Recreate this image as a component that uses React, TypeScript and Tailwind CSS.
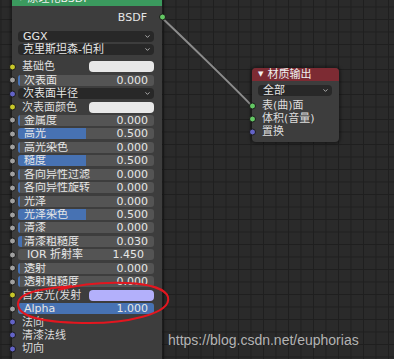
import { ChevronDown } from "lucide-react"

type Row =
  | { kind: "color"; label: string; color: string; socket: string }
  | { kind: "slider"; label: string; value: number; socket: string }
  | { kind: "drop"; label: string; socket: string }
  | { kind: "num"; label: string; value: string; socket: string }
  | { kind: "label"; label: string; socket: string }

const YELLOW = "#c7c729"
const GRAY = "#a1a1a1"
const VEC = "#6363c7"
const GREEN = "#63c763"

const rows: Row[] = [
  { kind: "color", label: "基础色", color: "#e8e8e8", socket: YELLOW },
  { kind: "slider", label: "次表面", value: 0, socket: GRAY },
  { kind: "drop", label: "次表面半径", socket: VEC },
  { kind: "color", label: "次表面颜色", color: "#e8e8e8", socket: YELLOW },
  { kind: "slider", label: "金属度", value: 0, socket: GRAY },
  { kind: "slider", label: "高光", value: 0.5, socket: GRAY },
  { kind: "slider", label: "高光染色", value: 0, socket: GRAY },
  { kind: "slider", label: "糙度", value: 0.5, socket: GRAY },
  { kind: "slider", label: "各向异性过滤", value: 0, socket: GRAY },
  { kind: "slider", label: "各向异性旋转", value: 0, socket: GRAY },
  { kind: "slider", label: "光泽", value: 0, socket: GRAY },
  { kind: "slider", label: "光泽染色", value: 0.5, socket: GRAY },
  { kind: "slider", label: "清漆", value: 0, socket: GRAY },
  { kind: "slider", label: "清漆粗糙度", value: 0.03, socket: GRAY },
  { kind: "num", label: "IOR 折射率", value: "1.450", socket: GRAY },
  { kind: "slider", label: "透射", value: 0, socket: GRAY },
  { kind: "slider", label: "透射粗糙度", value: 0, socket: GRAY },
  { kind: "color", label: "自发光(发射", color: "#b3b0fb", socket: YELLOW },
  { kind: "slider", label: "Alpha", value: 1, socket: GRAY },
  { kind: "label", label: "法向", socket: VEC },
  { kind: "label", label: "清漆法线", socket: VEC },
  { kind: "label", label: "切向", socket: VEC },
]

function Socket({ color, side = "left" }: { color: string; side?: "left" | "right" }) {
  return (
    <span
      className={`absolute top-1/2 h-[7px] w-[7px] -translate-y-1/2 rounded-full border border-[#1a1a1a] ${
        side === "left" ? "left-[-3.5px]" : "right-[-3.5px]"
      }`}
      style={{ backgroundColor: color }}
    />
  )
}

function InputRow({ row }: { row: Row }) {
  return (
    <div className="relative flex h-[13.45px] items-center">
      <Socket color={row.socket} />
      {row.kind === "color" && (
        <div className="flex w-full items-center pl-[10px] pr-[8px]">
          <span className="flex-1 text-[#dcdcdc]">{row.label}</span>
          <span className="h-[11px] w-[65px] rounded-[4px]" style={{ backgroundColor: row.color }} />
        </div>
      )}
      {row.kind === "slider" && (
        <div className="ml-[6px] mr-[8px] flex-1">
          <div className="relative h-[11px] overflow-hidden rounded-[3px] bg-[#545454]">
            <div
              className="absolute inset-y-0 left-0 bg-[#4772b3]"
              style={{ width: `${Math.max(row.value, 0.012) * 100}%` }}
            />
            <div className="relative flex h-full items-center justify-between pl-[6px] pr-[6px] text-[#e6e6e6]">
              <span>{row.label}</span>
              <span>{row.value.toFixed(3)}</span>
            </div>
          </div>
        </div>
      )}
      {row.kind === "num" && (
        <div className="ml-[6px] mr-[8px] flex-1">
          <div className="flex h-[11px] items-center justify-between rounded-[3px] bg-[#545454] pl-[9px] pr-[10px] text-[#e6e6e6]">
            <span>{row.label}</span>
            <span>{row.value}</span>
          </div>
        </div>
      )}
      {row.kind === "drop" && (
        <div className="ml-[6px] mr-[8px] flex-1">
          <Dropdown text={row.label} />
        </div>
      )}
      {row.kind === "label" && <span className="pl-[10px] text-[#dcdcdc]">{row.label}</span>}
    </div>
  )
}

function Dropdown({ text }: { text: string }) {
  return (
    <div className="flex h-[11px] items-center justify-between rounded-[4px] bg-[#282828] pl-[5px] pr-[3px] text-[#e6e6e6]">
      <span>{text}</span>
      <ChevronDown size={7} strokeWidth={3} className="text-[#bdbdbd]" />
    </div>
  )
}

export default function App() {
  return (
    <div
      className="relative h-[359px] w-[394px] overflow-hidden bg-[#2a2a2a] bg-[linear-gradient(to_right,#1f1f1f_1px,transparent_1px),linear-gradient(to_bottom,#1f1f1f_1px,transparent_1px)] bg-[size:12.5px_12.5px] bg-[position:0.5px_6.5px] text-[11px] leading-none"
      style={{ fontFamily: '"DejaVu Sans", "Noto Sans CJK SC", sans-serif' }}
    >
      {/* link BSDF -> surface */}
      <svg className="absolute inset-0" width="394" height="359">
        <path d="M161 17 C 175 30, 235 88, 252 106" stroke="#8c8c8c" strokeWidth="2" fill="none" />
      </svg>

      {/* principled bsdf node */}
      <div className="absolute left-[12px] top-[-9px] w-[150px] rounded-[5px] bg-[#3d3d3d] shadow-[0_0_3px_2px_rgba(0,0,0,0.35)]">
        <div className="flex h-[15px] items-center gap-[4px] rounded-t-[5px] bg-[#3b9a5e] pl-[6px] text-[#f0f0f0]">
          <span className="text-[7px]">▼</span>
          <span>原理化BSDF</span>
        </div>
        <div className="relative mt-[4px] flex h-[14px] items-center justify-end pr-[15px] text-[#e6e6e6]">
          BSDF
          <Socket color={GREEN} side="right" />
        </div>
        <div className="mx-[8px] ml-[6px] mt-[7px] flex flex-col gap-[2px]">
          <Dropdown text="GGX" />
          <Dropdown text="克里斯坦森-伯利" />
        </div>
        <div className="mt-[5px] flex flex-col pb-[10px]">
          {rows.map((r) => (
            <InputRow key={r.label} row={r} />
          ))}
        </div>
      </div>

      {/* material output node */}
      <div className="absolute left-[252px] top-[68px] h-[74px] w-[87px] rounded-[4px] bg-[#3d3d3d] shadow-[0_0_3px_2px_rgba(0,0,0,0.35)]">
        <div className="flex h-[13px] items-center gap-[4px] rounded-t-[4px] bg-[#7d2b33] pl-[6px] text-[#f0f0f0]">
          <span className="text-[7px]">▼</span>
          <span>材质输出</span>
        </div>
        <div className="ml-[6px] mr-[7px] mt-[4px]">
          <Dropdown text="全部" />
        </div>
        <div className="mt-[3px] flex flex-col text-[#dcdcdc]">
          {[
            ["表(曲)面", GREEN],
            ["体积(音量)", GREEN],
            ["置换", VEC],
          ].map(([l, c]) => (
            <div key={l} className="relative flex h-[13px] items-center pl-[10px]">
              <Socket color={c} />
              {l}
            </div>
          ))}
        </div>
      </div>

      {/* hand-drawn annotation */}
      <svg className="absolute inset-0" width="394" height="359">
        <path
          d="M58 290 C 100 279, 163 280, 168 297 C 172 314, 125 324, 82 323 C 42 322, 18 317, 18 304 C 18 293, 38 289, 72 286"
          stroke="#e3161f"
          strokeWidth="2"
          fill="none"
        />
      </svg>

      <div
        className="absolute left-[168px] top-[333px] text-[14px] text-[#cfcfcf]/85"
        style={{ fontFamily: '"Liberation Sans", Arial, sans-serif' }}
      >
        https://blog.csdn.net/euphorias
      </div>
    </div>
  )
}
